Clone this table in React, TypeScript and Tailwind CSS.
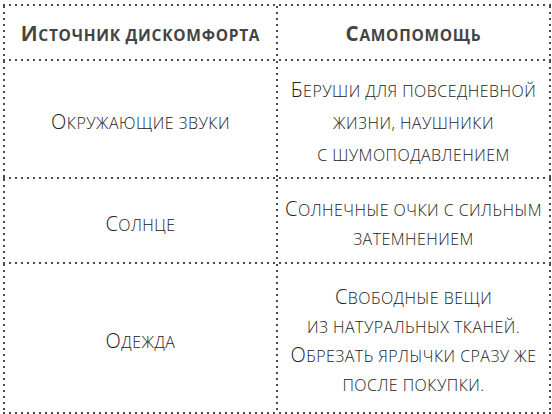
const ROWS: { source: string; help: string[]; h: string; lead: string }[] = [
  {
    source: "Окружающие звуки",
    help: ["Беруши для повседневной", "жизни, наушники", "с шумоподавлением"],
    h: "h-[116px]",
    lead: "leading-[32px]",
  },
  {
    source: "Солнце",
    help: ["Солнечные очки с сильным", "затемнением"],
    h: "h-[83px]",
    lead: "leading-[29px]",
  },
  {
    source: "Одежда",
    help: ["Свободные вещи", "из натуральных тканей.", "Обрезать ярлычки сразу же", "после покупки."],
    h: "h-[148px]",
    lead: "leading-[28.5px]",
  },
];

function HLine() {
  return (
    <div className="h-[2px] w-full bg-[image:repeating-linear-gradient(to_right,#4a4a4a_0_2px,transparent_2px_6px)]" />
  );
}

function VLine() {
  return (
    <div className="w-[2px] shrink-0 self-stretch bg-[image:repeating-linear-gradient(to_bottom,#4a4a4a_0_2px,transparent_2px_6px)]" />
  );
}

// капители: заглавные крупнее, строчные — прописными помельче
function Caps({ text, big }: { text: string; big: string }) {
  return (
    <span className="uppercase">
      {text.split("").map((ch, i) =>
        ch !== ch.toLowerCase() ? (
          <span key={i} className={big}>
            {ch}
          </span>
        ) : (
          ch
        )
      )}
    </span>
  );
}

export default function App() {
  return (
    <div className="w-[552px] h-[414px] bg-white pt-[4px] pl-[3px] font-['Open_Sans',sans-serif]">
      <div className="w-[548px]">
        <HLine />

        {/* Шапка */}
        <div className="flex h-[53px]">
          <VLine />
          <div className="flex w-[271px] items-center justify-center pt-[2px] text-[15.5px] font-bold tracking-[0.7px] text-[#444]">
            <Caps text="Источник дискомфорта" big="text-[20.5px]" />
          </div>
          <VLine />
          <div className="flex w-[271px] items-center justify-center pt-[2px] text-[15.5px] font-bold tracking-[0.7px] text-[#444]">
            <Caps text="Самопомощь" big="text-[20.5px]" />
          </div>
          <VLine />
        </div>

        {ROWS.map((r) => (
          <div key={r.source}>
            <HLine />
            <div className={`flex ${r.h}`}>
              <VLine />
              <div className="flex w-[271px] items-center justify-center pt-[6px] text-[16px] font-light tracking-[0.45px] text-[#222]">
                <Caps text={r.source} big="text-[20px]" />
              </div>
              <VLine />
              <div
                className={`flex w-[271px] flex-col items-center justify-center pt-[6px] text-[16px] font-light tracking-[0.45px] text-[#222] ${r.lead}`}
              >
                {r.help.map((line) => (
                  <Caps key={line} text={line} big="text-[20px]" />
                ))}
              </div>
              <VLine />
            </div>
          </div>
        ))}
        <HLine />
      </div>
    </div>
  );
}
